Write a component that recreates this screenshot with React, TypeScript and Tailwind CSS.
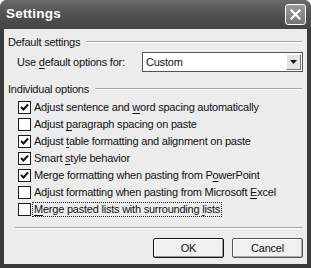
import React from "react";

const font = { fontFamily: '"Liberation Sans", Arial, sans-serif' };

function Check({ checked }: { checked: boolean }) {
  return (
    <div className="w-[13px] h-[13px] border border-[#1c1c1c] bg-white flex items-center justify-center shrink-0">
      {checked && (
        <svg width="9" height="9" viewBox="0 0 9 9">
          <path d="M1 4 L3.5 6.5 L8 1.5" stroke="#111" strokeWidth="2" fill="none" />
        </svg>
      )}
    </div>
  );
}

function U({ c }: { c: string }) {
  return <span className="underline underline-offset-[2px]">{c}</span>;
}

function Header({ children }: { children: React.ReactNode }) {
  return (
    <div className="flex items-center h-[14px] pl-[4px] pr-[1px]">
      <span className="text-[#111] whitespace-nowrap">{children}</span>
      <div className="flex-1 ml-[6px] flex flex-col">
        <div className="h-px bg-[#a6a6a6]" />
        <div className="h-px bg-white" />
      </div>
    </div>
  );
}

export default function App() {
  const rows: { checked: boolean; label: React.ReactNode; focus?: boolean }[] = [
    { checked: true, label: <>Adjust sentence and <U c="w" />ord spacing automatically</> },
    { checked: false, label: <>Adjust <U c="p" />aragraph spacing on paste</> },
    { checked: true, label: <>Adjust <U c="t" />able formatting and alignment on paste</> },
    { checked: true, label: <>Smart <U c="s" />tyle behavior</> },
    { checked: true, label: <>Merge formatting when pasting from P<U c="o" />werPoint</> },
    { checked: false, label: <>Adjust formatting when pasting from Microsoft <U c="E" />xcel</> },
    { checked: false, label: <><U c="M" />erge pasted lists with surrounding <U c="l" />ists</>, focus: true },
  ];
  return (
    <div className="w-[311px] h-[268px] bg-[#3a3a3a] rounded-t-[7px] flex flex-col text-[11px] tracking-[-0.22px] text-[#111] overflow-hidden" style={font}>
      <div className="h-[29px] shrink-0 flex items-center justify-between pl-[6px] pr-[5px] bg-gradient-to-b from-[#6a6a6a] via-[#505050] to-[#444]">
        <span className="text-white font-bold text-[13.5px] tracking-[0.2px]">Settings</span>
        <div className="w-[21px] h-[21px] rounded-[3px] border border-white bg-gradient-to-b from-[#9a9a9a] to-[#777] flex items-center justify-center">
          <svg width="11" height="11" viewBox="0 0 11 11">
            <path d="M1.5 1.5 L9.5 9.5 M9.5 1.5 L1.5 9.5" stroke="white" strokeWidth="2.2" strokeLinecap="square" />
          </svg>
        </div>
      </div>
      <div className="flex-1 ml-[4px] mr-[4px] mb-[4px] bg-[#ececec] flex flex-col pt-[6px] pr-[4px]">
        <Header>Default settings</Header>
        <div className="flex items-center mt-[3px] h-[20px]">
          <span className="pl-[13px] w-[138px]">Use <U c="d" />efault options for:</span>
          <div className="flex-1 h-[20px] border border-[#555] bg-white flex items-center pl-[3px] pr-[1px]">
            <span className="flex-1">Custom</span>
            <div className="w-[15px] h-[16px] bg-[#e4e4e4] border border-t-white border-l-white border-r-[#777] border-b-[#777] flex items-center justify-center">
              <svg width="7" height="4" viewBox="0 0 7 4">
                <path d="M0 0 H7 L3.5 4 Z" fill="#111" />
              </svg>
            </div>
          </div>
        </div>
        <div className="mt-[10px]">
          <Header>Individual options</Header>
        </div>
        <div className="flex flex-col mt-[3px]">
          {rows.map((r, i) => (
            <div key={i} className="h-[17px] flex items-center pl-[14px]">
              <Check checked={r.checked} />
              <span className={"ml-[2px] px-[1px] leading-[13px] whitespace-nowrap " + (r.focus ? "outline-1 outline-dotted outline-[#222]" : "")}>
                {r.label}
              </span>
            </div>
          ))}
        </div>
        <div className="mt-[9px] ml-[11px] flex flex-col">
          <div className="h-px bg-[#a6a6a6]" />
          <div className="h-px bg-white" />
        </div>
        <div className="mt-[9px] flex justify-end gap-[8px]">
          <button className="w-[71px] h-[20px] border border-[#111] bg-[#f0f0f0] rounded-[2px] shadow-[inset_-1px_-1px_0_#999,inset_1px_1px_0_#fff]">OK</button>
          <button className="w-[71px] h-[20px] border border-[#555] bg-[#f0f0f0] rounded-[2px] shadow-[inset_-1px_-1px_0_#aaa,inset_1px_1px_0_#fff]">Cancel</button>
        </div>
      </div>
    </div>
  );
}
